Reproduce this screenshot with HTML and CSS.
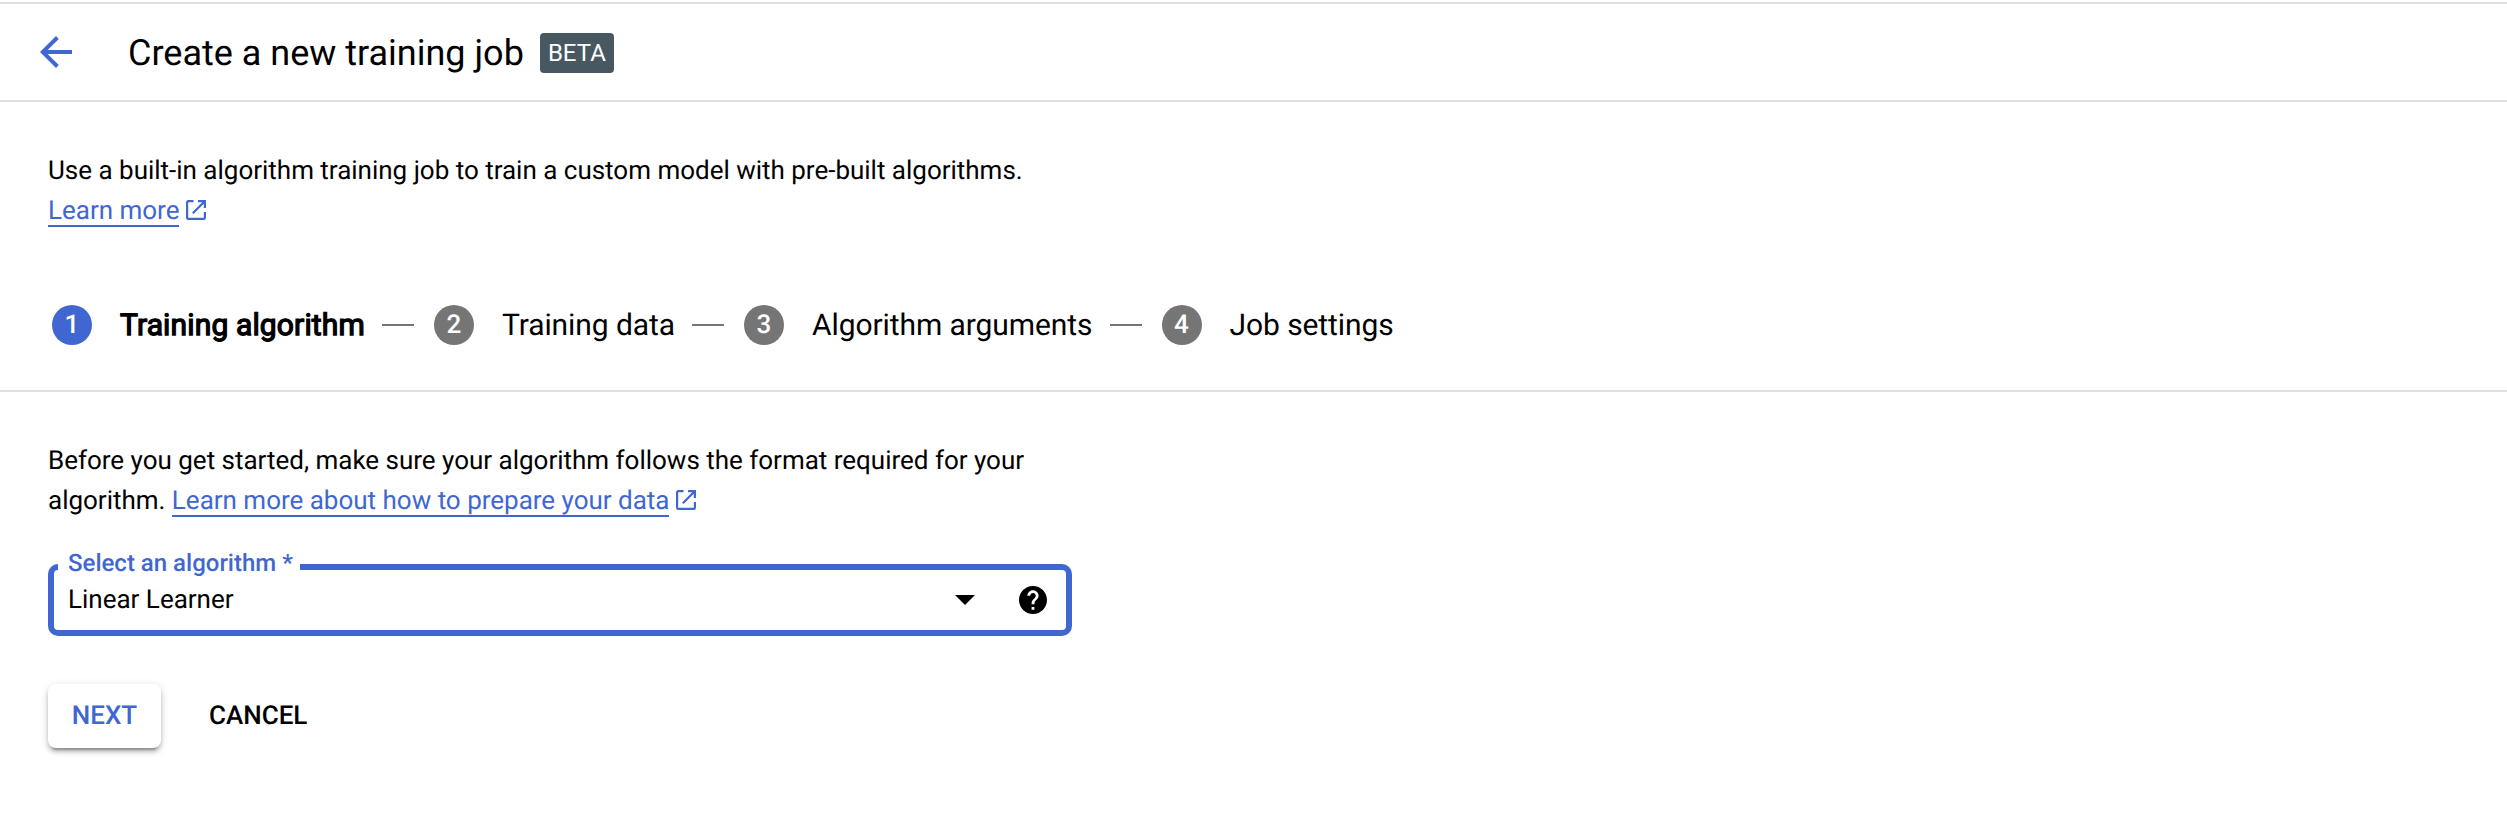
FILE: index.html
```html
<!DOCTYPE html>
<html lang="en">
<head>
<meta charset="utf-8">
<title>Create a new training job</title>
<link rel="stylesheet" href="styles.css">
</head>
<body>
<header class="header">
  <svg class="back" viewBox="0 0 32 32"><path d="M32 14H7.7L18.8 2.9 16 0 0 16l16 16 2.8-2.9L7.7 18H32z"/></svg>
  <h1 class="title">Create a new training job</h1>
  <span class="badge">BETA</span>
</header>
<section class="intro">
  <p class="text">Use a built-in algorithm training job to train a custom model with pre-built algorithms.<br><a class="link">Learn more</a><svg class="ext" viewBox="0 0 20 20"><path d="M7.5 1.1H2.2A1.1 1.1 0 0 0 1.1 2.2V17.8A1.1 1.1 0 0 0 2.2 18.9H17.8A1.1 1.1 0 0 0 18.9 17.8V12M12 1.1H18.9V8M18.5 1.5L6.8 13.2"/></svg></p>
</section>
<nav class="stepper">
  <span class="num current">1</span><span class="label strong">Training algorithm</span><i class="line"></i>
  <span class="num">2</span><span class="label">Training data</span><i class="line"></i>
  <span class="num">3</span><span class="label">Algorithm arguments</span><i class="line"></i>
  <span class="num">4</span><span class="label">Job settings</span>
</nav>
<main class="main">
  <p class="text">Before you get started, make sure your algorithm follows the format required for your<br>algorithm. <a class="link">Learn more about how to prepare your data</a><svg class="ext" viewBox="0 0 20 20"><path d="M7.5 1.1H2.2A1.1 1.1 0 0 0 1.1 2.2V17.8A1.1 1.1 0 0 0 2.2 18.9H17.8A1.1 1.1 0 0 0 18.9 17.8V12M12 1.1H18.9V8M18.5 1.5L6.8 13.2"/></svg></p>
  <div class="field">
    <span class="field-label">Select an algorithm *</span>
    <span class="value">Linear Learner</span>
    <svg class="caret" viewBox="0 0 20 10"><path d="M0 0H20L10 10z"/></svg>
    <svg class="help" viewBox="2 2 20 20"><path d="M12 2C6.48 2 2 6.48 2 12s4.48 10 10 10 10-4.48 10-10S17.52 2 12 2zm1 17h-2v-2h2v2zm2.07-7.75l-.9.92C13.45 12.9 13 13.5 13 15h-2v-.5c0-1.1.45-2.1 1.17-2.83l1.24-1.26c.37-.36.59-.86.59-1.41 0-1.1-.9-2-2-2s-2 .9-2 2H8c0-2.21 1.79-4 4-4s4 1.79 4 4c0 .88-.36 1.68-.93 2.25z"/></svg>
  </div>
  <div class="actions">
    <button class="btn next">NEXT</button>
    <button class="btn cancel">CANCEL</button>
  </div>
</main>
</body>
</html>
```
FILE: styles.css
```css
* { box-sizing: border-box; }
body {
  margin: 0;
  padding-top: 2px;
  min-height: 821px;
  background: #fff;
  color: #000;
  font: 26px/40px Roboto, "Liberation Sans", sans-serif;
  text-rendering: geometricPrecision;
}
.header {
  display: flex;
  align-items: center;
  height: 100px;
  padding-left: 40px;
  border-top: 2px solid #e0e0e0;
  border-bottom: 2px solid #e0e0e0;
}
.back { width: 32px; height: 32px; fill: #4067d1; }
.title { margin: 2px 0 0 56px; font-size: 36px; font-weight: 400; white-space: nowrap; }
.badge {
  width: 74px;
  height: 40px;
  margin: 2px 0 0 16px;
  border-radius: 4px;
  background: #485861;
  color: #fff;
  font-size: 24px;
  text-align: center;
}
.text { margin: 0; white-space: nowrap; letter-spacing: -0.01px; }
.intro { height: 204px; padding: 49px 48px 0; }
.link { color: #4067d1; box-shadow: 0 1px #4067d1, inset 0 -1px #4067d1; }
.ext { width: 20px; height: 20px; margin-left: 7px; vertical-align: -1px; fill: none; stroke: #4067d1; stroke-width: 2.2; }
.stepper {
  display: flex;
  align-items: center;
  height: 86px;
  padding: 0 52px 46px;
  border-bottom: 2px solid #e0e0e0;
  white-space: nowrap;
}
.num {
  width: 40px;
  height: 40px;
  border-radius: 50%;
  background: #757575;
  color: #fff;
  font-size: 26px;
  font-weight: 500;
  text-align: center;
}
.current { background: #4067d1; }
.label { margin-left: 28px; padding-top: 1px; font-size: 30px; letter-spacing: -0.08px; }
.strong { letter-spacing: 0.14px; -webkit-text-stroke: 1.3px #000; }
.line { width: 32px; height: 2px; margin: 0 20px 0 17px; background: #757575; }
.main { padding: 49px 48px 0; }
.field {
  position: relative;
  display: flex;
  align-items: center;
  width: 1024px;
  height: 72px;
  margin-top: 43px;
  padding: 0 19px 0 14px;
  border: 6px solid #4067d1;
  border-radius: 10px;
}
.field-label {
  position: absolute;
  top: -27px;
  left: 4px;
  width: 242px;
  height: 34px;
  padding-left: 10px;
  background: #fff;
  color: #4067d1;
  font-size: 24px;
  font-weight: 500;
  white-space: nowrap;
}
.value { flex: 1; }
.caret { width: 20px; height: 10px; }
.help { width: 28px; height: 28px; margin-left: 44px; }
.actions { display: flex; margin-top: 48px; }
.btn {
  height: 64px;
  padding: 0;
  border: 0;
  border-radius: 8px;
  background: #fff;
  font: 500 26px Roboto, "Liberation Sans", sans-serif;
  text-rendering: geometricPrecision;
}
.next {
  width: 113px;
  color: #4067d1;
  box-shadow: 0 6px 2px -4px rgba(0,0,0,.24), 0 4px 4px rgba(0,0,0,.2), 0 2px 10px rgba(0,0,0,.13);
}
.cancel { margin-left: 48px; }
```
